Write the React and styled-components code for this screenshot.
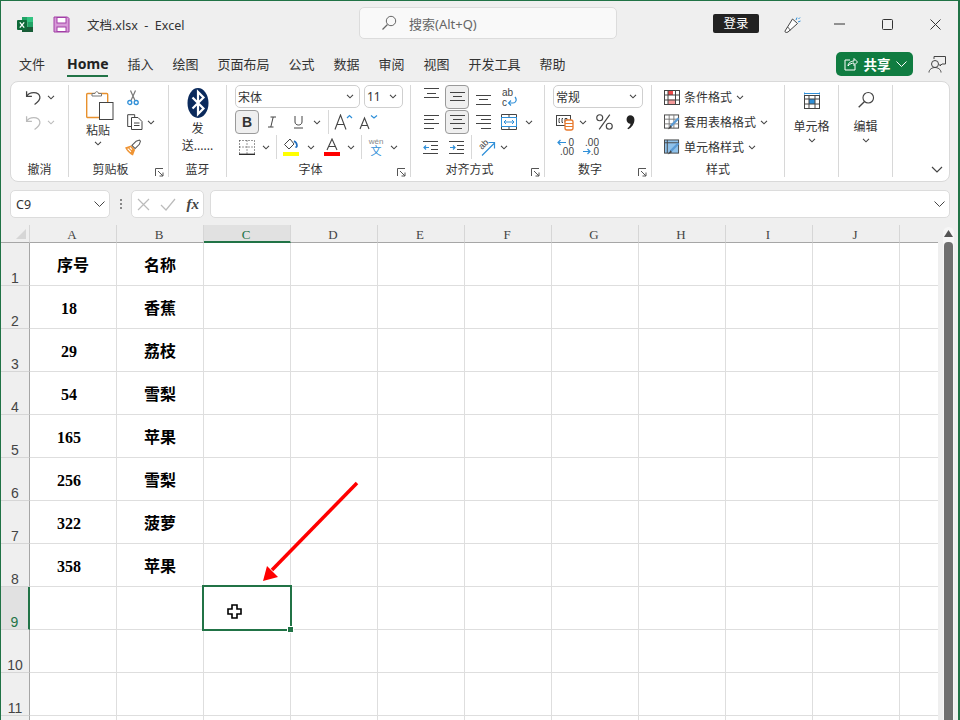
import React from 'react';
import styled, { createGlobalStyle } from 'styled-components';

const GREEN = '#217346';
const INK = '#444';
const BLUE = '#2f8fd8';

const GlobalStyle = createGlobalStyle`
  html, body { margin: 0; padding: 0; }
  body { font-family: "Noto Sans", "Noto Sans CJK SC", sans-serif; color: #333; }
  svg { display: block; flex: none; }
`;

const Win = styled.div`
  box-sizing: border-box;
  width: 960px;
  height: 720px;
  overflow: hidden;
  background: #efefef;
  border: 1px solid ${GREEN};
  border-right-width: 2px;
  border-bottom: 0;
  display: flex;
  flex-direction: column;
`;

const TitleBar = styled.div`
  box-sizing: border-box;
  height: 44px;
  padding-top: 2px;
  flex: none;
  display: flex;
  align-items: center;
  font-size: 12.5px;
`;

const TitleLeft = styled.div`
  width: 358px;
  display: flex;
  align-items: center;
  padding-left: 16px;
  box-sizing: border-box;
`;

const DocName = styled.span`
  white-space: pre;
  color: #333;
  margin-left: -1px;
`;

const SearchBox = styled.div`
  box-sizing: border-box;
  width: 258px;
  height: 32px;
  margin-top: -2px;
  background: #f9f9f9;
  border: 1px solid #dcdcdc;
  border-radius: 5px;
  display: flex;
  align-items: center;
  gap: 12px;
  padding-left: 21px;
  color: #666;
  font-size: 13px;
`;

const LoginBtn = styled.div`
  margin-left: 96px;
  margin-top: -1px;
  width: 46px;
  height: 19px;
  line-height: 19px;
  background: #222;
  color: #fff;
  border-radius: 2px;
  text-align: center;
  font-size: 12.5px;
`;

const WinBtn = styled.div`
  width: ${({ $w }) => $w}px;
  display: flex;
  justify-content: center;
`;

const TabBar = styled.div`
  height: 36px;
  flex: none;
  display: flex;
  align-items: flex-start;
  gap: 19px;
  padding-left: 18px;
  font-size: 13px;
  position: relative;
`;

const Tab = styled.div`
  height: 30px;
  line-height: 38px;
  box-sizing: content-box;
  white-space: nowrap;
  ${({ $active }) => $active && `
    font-weight: 700;
    font-size: 14px;
    color: #222;
    border-bottom: 2px solid ${GREEN};
    margin-left: 3px;
  `}
`;

const TabRight = styled.div`
  margin-left: auto;
  display: flex;
  align-items: center;
  gap: 15px;
  padding: 7px 12px 0 0;
`;

const ShareBtn = styled.div`
  width: 77px;
  height: 24px;
  box-sizing: border-box;
  background: #107c41;
  border-radius: 5px;
  color: #fff;
  display: flex;
  align-items: center;
  padding: 0 6px 0 8px;
  font-size: 13.5px;
  font-weight: 700;
  justify-content: space-between;
`;

const Ribbon = styled.div`
  flex: none;
  box-sizing: border-box;
  height: 101px;
  margin: 0 8px 0 9px;
  background: #fff;
  border: 1px solid #d9d9d9;
  border-radius: 8px;
  padding: 3px 0 4px;
  display: flex;
  position: relative;
`;

const Group = styled.div`
  box-sizing: border-box;
  width: ${({ $w }) => $w}px;
  border-right: 1px solid #d8d8d8;
  padding-left: ${({ $pad }) => $pad || 0}px;
  display: flex;
  flex-direction: column;
  position: relative;
`;

const GroupBody = styled.div`
  display: flex;
  flex-direction: ${({ $row }) => ($row ? 'row' : 'column')};
  gap: 1px;
  flex: 1;
`;

const GroupLabel = styled.div`
  font-size: 12px;
  line-height: 15px;
  height: 15px;
  text-align: center;
  color: #333;
  margin-left: ${({ $pad }) => ($pad ? -$pad : 0)}px;
  margin-right: ${({ $launcher }) => ($launcher ? 16 : 0)}px;
`;

const Launcher = styled.div`
  position: absolute;
  right: 4px;
  bottom: 0;
`;

const ToolRow = styled.div`
  height: 24px;
  display: flex;
  align-items: center;
  gap: ${({ $gap }) => $gap || 0}px;
  padding-left: ${({ $pad }) => $pad || 0}px;
  font-size: 12px;
`;

const Tool = styled.div`
  width: ${({ $w }) => $w}px;
  height: 24px;
  flex: none;
  display: flex;
  align-items: center;
  justify-content: center;
  box-sizing: border-box;
  ${({ $on }) => $on && `
    background: #efefef;
    border: 1px solid #9a9a9a;
    border-radius: 4px;
  `}
`;

const BoldMark = styled.span`
  font-family: "Liberation Sans", sans-serif;
  font-weight: 700;
  font-size: 14px;
  color: #333;
`;

const ToolSep = styled.div`
  width: 1px;
  height: 24px;
  flex: none;
  background: #d8d8d8;
  margin: 0 ${({ $r }) => $r || 0}px 0 ${({ $l }) => $l || 0}px;
`;

const Combo = styled.div`
  box-sizing: border-box;
  width: ${({ $w }) => $w}px;
  height: 23px;
  margin-bottom: 1px;
  border: 1px solid #cfcfcf;
  border-radius: 5px;
  display: flex;
  align-items: center;
  justify-content: space-between;
  padding: 0 5px 0 2px;
  font-size: 12px;
  color: #333;
`;

const BigTool = styled.div`
  display: flex;
  flex-direction: column;
  align-items: center;
  font-size: 12px;
  line-height: 17px;
  color: #333;
  gap: ${({ $gap }) => $gap || 0}px;
  padding-top: ${({ $top }) => $top || 0}px;
`;

const BigLabel = styled.span`
  margin-top: ${({ $mt }) => $mt || 0}px;
`;

const StyleText = styled.span`
  margin: 0 4px 0 4px;
  white-space: nowrap;
`;

const PasteCol = styled(BigTool)`
  width: 48px;
  margin-left: 5px;
`;

const SideCol = styled.div`
  display: flex;
  flex-direction: column;
  gap: 1px;
`;

const Collapse = styled.div`
  position: absolute;
  right: 6px;
  bottom: 8px;
`;

const FormulaBar = styled.div`
  flex: none;
  height: 28px;
  margin: 8px 8px 0 9px;
  display: flex;
  align-items: stretch;
`;

const BarBox = styled.div`
  box-sizing: border-box;
  background: #fff;
  border: 1px solid #dcdcdc;
  border-radius: 5px;
  display: flex;
  align-items: center;
  width: ${({ $w }) => ($w ? `${$w}px` : 'auto')};
  flex: ${({ $w }) => ($w ? 'none' : 1)};
  justify-content: ${({ $j }) => $j || 'space-between'};
  padding: 0 4px 0 5px;
  font-size: 12.5px;
`;

const Grip = styled.div`
  width: 21px;
  display: flex;
  justify-content: center;
  align-items: center;
`;

const BarGap = styled.div`
  width: 6px;
  flex: none;
`;

const FxText = styled.span`
  font-family: "Liberation Serif", serif;
  font-style: italic;
  font-weight: 700;
  font-size: 15px;
  color: #444;
`;

const Sheet = styled.div`
  flex: 1;
  margin-top: 7px;
  display: flex;
  position: relative;
  min-height: 0;
`;

const GridArea = styled.div`
  width: 937px;
  flex: none;
  background: #fff;
`;

const HeadRow = styled.div`
  display: flex;
  height: 18px;
  background: #efefef;
  font-family: "Liberation Serif", serif;
  font-size: 13px;
`;

const Corner = styled.div`
  box-sizing: border-box;
  width: 29px;
  flex: none;
  border-bottom: 1px solid #a6a6a6;
  border-right: 1px solid #d6d6d6;
  display: flex;
  justify-content: flex-end;
  align-items: flex-end;
  padding: 0 3px 3px 0;
`;

const ColHead = styled.div`
  box-sizing: border-box;
  width: ${({ $last }) => ($last ? 'auto' : '87px')};
  flex: ${({ $last }) => ($last ? 1 : 'none')};
  text-align: center;
  line-height: 20px;
  padding-right: 2px;
  color: ${({ $sel }) => ($sel ? GREEN : '#444')};
  background: ${({ $sel }) => ($sel ? '#e1e1e1' : 'transparent')};
  border-right: ${({ $last }) => ($last ? 0 : '1px solid #d6d6d6')};
  border-bottom: ${({ $sel }) => ($sel ? `2px solid ${GREEN}` : '1px solid #a6a6a6')};
`;

const Row = styled.div`
  display: flex;
  height: 43px;
`;

const RowHead = styled.div`
  box-sizing: border-box;
  width: 29px;
  flex: none;
  background: ${({ $sel }) => ($sel ? '#e1e1e1' : '#efefef')};
  color: ${({ $sel }) => ($sel ? GREEN : '#444')};
  border-right: ${({ $sel }) => ($sel ? `2px solid ${GREEN}` : '1px solid #a6a6a6')};
  border-bottom: 1px solid #d6d6d6;
  font-size: 14px;
  font-family: "Liberation Sans", sans-serif;
  display: flex;
  align-items: flex-end;
  justify-content: center;
  line-height: 14px;
`;

const Cell = styled.div`
  box-sizing: border-box;
  width: ${({ $last }) => ($last ? 'auto' : '87px')};
  flex: ${({ $last }) => ($last ? 1 : 'none')};
  border-right: ${({ $last }) => ($last ? 0 : '1px solid #dedede')};
  border-bottom: 1px solid #dedede;
  display: flex;
  align-items: center;
  justify-content: center;
  font-weight: 700;
  color: #000;
  font-size: 16px;
  position: relative;
  ${({ $num }) => $num && `
    font-family: "Liberation Serif", serif;
    padding: 3px 8px 0 0;
  `}
`;

const Selection = styled.div`
  position: absolute;
  left: -2px;
  top: -2px;
  right: -2px;
  bottom: -2px;
  border: 2px solid ${GREEN};
  z-index: 2;
`;

const FillHandle = styled.div`
  position: absolute;
  right: -3px;
  bottom: -3px;
  width: 5px;
  height: 5px;
  background: ${GREEN};
  border: 1px solid #fff;
  box-sizing: content-box;
  margin: -1px;
`;

const CursorMark = styled.svg`
  position: absolute;
  left: 23px;
  top: 17px;
`;

const ArrowMark = styled.svg`
  position: absolute;
  left: 259px;
  top: 255px;
  z-index: 3;
`;

const ScrollCol = styled.div`
  flex: 1;
  padding: 2px 4px 0 5px;
  overflow: hidden;
`;

const ScrollTrack = styled.div`
  background: #f6f6f6;
  border-radius: 6px 6px 0 0;
  height: 600px;
  display: flex;
  flex-direction: column;
  align-items: center;
  padding-top: 3px;
`;

const ScrollThumb = styled.div`
  width: 9px;
  flex: 1;
  margin-top: 5px;
  background: #6f6f6f;
  border-radius: 4px 4px 0 0;
`;

const Caret = ({ color = INK }) => (
  <svg width="8" height="5" viewBox="0 0 8 5"><path d="M1 .8l3 3 3-3" fill="none" stroke={color} strokeWidth="1.1" /></svg>
);

const BigCaret = ({ color = INK }) => (
  <svg width="11" height="6" viewBox="0 0 11 6"><path d="M.5 .5l5 5 5-5" fill="none" stroke={color} /></svg>
);

const LauncherIcon = () => (
  <svg width="9" height="9" viewBox="0 0 9 9"><path d="M.5 8V.5H8M3 3l5 5M8 4.5V8H4.500" fill="none" stroke="#555" /></svg>
);

const ExcelIcon = () => (
  <svg width="17" height="17" viewBox="0 0 17 17">
    <path d="M5 1h11v5H5z" fill="#21a366" />
    <path d="M10 1h6v5h-6z" fill="#33c481" />
    <path d="M5 6h5.500v5H5z" fill="#107c41" />
    <path d="M10.500 6H16v5h-5.500z" fill="#21a366" />
    <path d="M5 11h11v5H5z" fill="#185c37" />
    <rect x="0" y="4" width="10" height="10" rx="1" fill="#0e6a39" />
    <path d="M2.800 6.300l4.400 5.400M7.200 6.300l-4.400 5.400" stroke="#fff" strokeWidth="1.300" />
  </svg>
);

const SaveIcon = () => (
  <svg width="17" height="17" viewBox="0 0 17 17">
    <path d="M1 1h13.500L16 2.500V16H1z" fill="#d79ad8" stroke="#a23ea6" />
    <rect x="4" y="1.500" width="9" height="5.500" fill="#fff" stroke="#a23ea6" />
    <rect x="4" y="11" width="9" height="4.500" fill="#fff" stroke="#a23ea6" />
  </svg>
);

const SearchIcon = ({ size = 16, color = '#666' }) => (
  <svg width={size} height={size} viewBox="0 0 16 16">
    <circle cx="10" cy="6" r="4.700" fill="none" stroke={color} />
    <path d="M6.500 9.500L1.500 14.500" stroke={color} strokeWidth="1.200" />
  </svg>
);

const PartyIcon = () => (
  <svg width="17" height="17" viewBox="0 0 17 17">
    <path d="M1 15L8.500 3l5 4.500-9.500 8.500c-1.500 .8-3.500 .5-3-1z" fill="#fff" stroke="#444" />
    <path d="M3.500 11.500c1 0 2.500 1.500 2.500 3" fill="none" stroke="#444" />
    <path d="M12 4l1-2.500M14 6l2.500-1M14.500 3l1.500-1.500" stroke={BLUE} />
  </svg>
);

const UndoIcon = ({ color = INK }) => (
  <svg width="17" height="17" viewBox="0 0 16 16">
    <path d="M1.500 2v5h5" fill="none" stroke={color} strokeWidth="1.200" />
    <path d="M1.500 7C4 2.500 13 2 14 7.500c.5 3-2 5-5 7" fill="none" stroke={color} strokeWidth="1.200" />
  </svg>
);

const PasteIcon = () => (
  <svg width="32" height="30" viewBox="-4 0 32 30">
    <rect x=".7" y="3.500" width="21" height="24" rx="1" fill="#fff" stroke="#e8912d" strokeWidth="1.400" />
    <path d="M6 6V3.500h3C9.500 1 12 1 12.500 3.500h3V6z" fill="#fff" stroke="#777" />
    <rect x="13.500" y="12.500" width="13.500" height="17" fill="#fff" stroke="#444" />
  </svg>
);

const ScissorsIcon = () => (
  <svg width="12" height="17" viewBox="0 0 12 16">
    <path d="M3.500 1l4.500 10M8.500 1L4 11" stroke="#777" strokeWidth="1.200" />
    <circle cx="2.800" cy="13" r="2" fill="none" stroke={BLUE} strokeWidth="1.300" />
    <circle cx="9.200" cy="13" r="2" fill="none" stroke={BLUE} strokeWidth="1.300" />
  </svg>
);

const CopyIcon = () => (
  <svg width="16" height="16" viewBox="0 0 16 16">
    <path d="M4 12.500H.7V.7h7v3" fill="none" stroke={INK} />
    <path d="M4.500 3.500H11l4 4v8H4.500z" fill="#fff" stroke={INK} />
    <path d="M7 9h5.500M7 11.500h5.500" stroke={INK} />
  </svg>
);

const BrushIcon = () => (
  <svg width="18" height="17" viewBox="0 0 16 16">
    <path d="M.5 8l5.500-2 4 4-2 5.500C5 14.500 2 11 .5 8z" fill="#ef9434" />
    <path d="M7 6l4-4 3-1 1 1-1 3-4 4z" fill="#fff" stroke="#555" />
    <path d="M3 9l3 3M5 8l2 2" stroke="#fff" />
  </svg>
);

const BluetoothIcon = () => (
  <svg width="22" height="30" viewBox="0 0 22 30">
    <ellipse cx="11" cy="15" rx="10.500" ry="15" fill="#0b2a5c" />
    <path d="M5.500 9.500l11 11L11 26V4l5.500 5.500-11 11" fill="none" stroke="#fff" strokeWidth="2.200" />
  </svg>
);

const ItalicIcon = () => (
  <svg width="10" height="12" viewBox="0 0 10 12"><path d="M3.500 1H9M1 11h5.500M6.200 1L3.800 11" fill="none" stroke={INK} /></svg>
);

const UnderlineIcon = () => (
  <svg width="11" height="14" viewBox="0 0 11 14"><path d="M2 1v6c0 4 7 4 7 0V1M1 13h9" fill="none" stroke={INK} /></svg>
);

const GrowIcon = ({ down }) => (
  <svg width="20" height="16" viewBox="0 0 20 16">
    <path d={down ? 'M1 15L5.500 4 10 15M2.500 11.500h6' : 'M1 15.500L6.500 1 12 15.500M3 10.500h7'} fill="none" stroke={INK} strokeWidth="1.100" />
    <path d={down ? 'M12 1.500l3 2.500 3-2.500' : 'M13 4l2.500-2.500L18 4'} fill="none" stroke={BLUE} strokeWidth="1.200" />
  </svg>
);

const BordersIcon = () => (
  <svg width="16" height="15" viewBox="0 0 16 15">
    <path d="M.5 .5h15M.5 .5v13M15.500 .5v13M8 .5v13M.5 7h15" stroke="#333" strokeDasharray="1 2" fill="none" />
    <path d="M0 14.300h16" stroke="#222" strokeWidth="1.300" />
  </svg>
);

const FillIcon = () => (
  <svg width="16" height="18" viewBox="0 0 16 18">
    <path d="M7 1L1.500 6.500 6 11l5-5z" fill="#fff" stroke={INK} />
    <path d="M11 3c2 1 3 3 3 5 0 1-1 1.500-1.500 .5" fill="none" stroke="#1f6fc0" strokeWidth="1.600" />
    <rect x="0" y="14" width="16" height="4" fill="#ffff00" />
  </svg>
);

const FontColorIcon = () => (
  <svg width="16" height="18" viewBox="0 0 16 18">
    <path d="M3 12L8 1l5 11M4.500 8.500h7" fill="none" stroke={INK} strokeWidth="1.100" />
    <rect x="0" y="14" width="16" height="4" fill="#ff0000" />
  </svg>
);

const PhoneticIcon = () => (
  <svg width="20" height="23" viewBox="0 0 20 23">
    <text x="10" y="8" fontSize="8" textAnchor="middle" fill="#888" fontFamily="Liberation Sans">wén</text>
    <text x="10" y="19" fontSize="11" textAnchor="middle" fill={BLUE} fontFamily="Noto Sans CJK SC">文</text>
  </svg>
);

const LinesIcon = ({ rows }) => (
  <svg width="15" height="19" viewBox="0 0 15 19">
    {rows.map(([x1, x2, y]) => (
      <path key={`${x1}-${y}`} d={`M${x1} ${y}.5H${x2}`} stroke={INK} />
    ))}
  </svg>
);

const WrapIcon = () => (
  <svg width="17" height="19" viewBox="0 0 17 19">
    <text x="1" y="8" fontSize="10" fill={INK} fontFamily="Liberation Sans">ab</text>
    <text x="1" y="18" fontSize="10" fill={INK} fontFamily="Liberation Sans">c</text>
    <path d="M14 9c2.500 3 .5 6-2 6H8M10 12.500L7.500 15l2.500 2.500" fill="none" stroke={BLUE} strokeWidth="1.200" />
  </svg>
);

const MergeIcon = () => (
  <svg width="16" height="16" viewBox="0 0 16 16">
    <path d="M.5 .5h15v15H.5zM.5 3.500h15M.5 12.500h15M8 .5v3M8 12.500v3" fill="none" stroke={INK} />
    <rect x=".5" y="3.500" width="15" height="9" fill="#fff" stroke={BLUE} />
    <path d="M3 8h10M5 6l-2 2 2 2M11 6l2 2-2 2" fill="none" stroke={BLUE} />
  </svg>
);

const IndentIcon = ({ out }) => (
  <svg width="16" height="13" viewBox="0 0 16 13">
    <path d="M0 .5h15M8 4.500h7M8 8.500h7M0 12.500h15" stroke={INK} />
    <path d={out ? 'M6 6.500H1M3 4.500l-2 2 2 2' : 'M1 6.500h5M4 4.500l2 2-2 2'} fill="none" stroke={BLUE} strokeWidth="1.200" />
  </svg>
);

const OrientIcon = () => (
  <svg width="20" height="20" viewBox="0 0 20 20">
    <text x="6" y="13" fontSize="9" fill={INK} fontFamily="Liberation Sans" transform="rotate(-45 6 13)">ab</text>
    <path d="M6 18.500L18 6.500M12.500 5.500H18.500V11.500" fill="none" stroke={BLUE} strokeWidth="1.200" />
  </svg>
);

const CurrencyIcon = () => (
  <svg width="18" height="17" viewBox="0 0 18 17">
    <rect x=".5" y="1.500" width="14" height="10" fill="#fff" stroke={INK} />
    <path d="M4 4.500H3v4h1M7 4.500H6v4h1M9 8.500v-4h2v4" fill="none" stroke={INK} />
    <rect x="9" y="6" width="8" height="10" rx="2" fill="#fff" stroke="#e8792d" strokeWidth="1.300" />
    <path d="M9 9.500h8M9 12.500h8" stroke="#e8792d" />
  </svg>
);

const PercentIcon = () => (
  <svg width="17" height="16" viewBox="0 0 16 15">
    <circle cx="3.500" cy="3.500" r="2.800" fill="none" stroke={INK} strokeWidth="1.100" />
    <circle cx="12.500" cy="11.500" r="2.800" fill="none" stroke={INK} strokeWidth="1.100" />
    <path d="M13 .5L3 14.500" stroke={INK} strokeWidth="1.100" />
  </svg>
);

const CommaIcon = () => (
  <svg width="9" height="15" viewBox="0 0 8 13">
    <path d="M3.500 0c2.500 0 4 1.500 4 4 0 3.500-2.500 7-5.500 8.500l-.8-.8C3 10 4 9 4 7.500 2 7.500 .5 6 .5 4S1.500 0 3.500 0z" fill="#222" />
  </svg>
);

const DecimalIcon = ({ more }) => (
  <svg width="18" height="24" viewBox="0 0 18 24">
    <text x="17" y="11" fontSize="10" textAnchor="end" fill={INK} fontFamily="Liberation Sans">{more ? '.00' : '0'}</text>
    <text x="17" y="20" fontSize="10" textAnchor="end" fill={INK} fontFamily="Liberation Sans">{more ? '.0' : '.00'}</text>
    <path d={more ? 'M1 16.500h7M5.500 14L8 16.500 5.500 19' : 'M9 7.500H1M3.500 5L1 7.500 3.500 10'} fill="none" stroke={BLUE} strokeWidth="1.200" />
  </svg>
);

const CondFormatIcon = () => (
  <svg width="16" height="15" viewBox="0 0 16 15">
    <rect x=".5" y=".5" width="15" height="14" fill="#fff" stroke={INK} />
    <rect x="4" y="1" width="5" height="4" fill="#ef4a4a" />
    <rect x="4" y="9.500" width="8" height="4.500" fill="#f39a9a" />
    <path d="M.5 5h15M.5 10h15M4 .5v14M11.500 .5v14" stroke={INK} />
  </svg>
);

const TableFormatIcon = ({ filled }) => (
  <svg width="16" height="16" viewBox="0 0 17 16">
    <rect x=".5" y=".5" width="15" height="14" fill={filled ? '#8fc1ea' : '#fff'} stroke={INK} />
    {!filled && <path d="M.5 5h15M.5 10h15M5.500 .5v14M10.500 .5v14" stroke="#777" />}
    {filled && <path d="M.5 3.500h15M3.500 .5v14" stroke={INK} />}
    <path d="M15.500 4L7 12.500" stroke="#5b9bd5" strokeWidth="2.500" />
    <path d="M7 11.500l-3 4.500 4.500-2.500z" fill={INK} />
  </svg>
);

const CellsIcon = () => (
  <svg width="16" height="17" viewBox="0 0 16 17">
    <path d="M.5 2.500v-2M15.500 2.500v-2M.5 1.500h15" stroke={BLUE} />
    <rect x=".5" y="3.500" width="15" height="13" fill="#fff" stroke={INK} />
    <rect x="5" y="7" width="6" height="5" fill={BLUE} />
    <path d="M.5 7h15M.5 12h15M5 3.500v13M11 3.500v13" stroke={INK} />
  </svg>
);

const ShareIcon = () => (
  <svg width="14" height="14" viewBox="0 0 14 14">
    <path d="M6 3H1v10h10V8" fill="none" stroke="#fff" />
    <path d="M4 9c0-3 3-5 6-5V1.500L13.500 5 10 8.500V6C8 6 5.500 7 4 9z" fill="none" stroke="#fff" />
  </svg>
);

const CommentUserIcon = () => (
  <svg width="18" height="17" viewBox="0 0 18 17">
    <circle cx="7" cy="8" r="3.500" fill="none" stroke={INK} />
    <path d="M1 16.500c0-3 3-5 6-5s6 2 6 5" fill="none" stroke={INK} />
    <path d="M6 3V.5h11.500V8H14l-2 2V8" fill="none" stroke={INK} />
  </svg>
);

const COLS = ['A', 'B', 'C', 'D', 'E', 'F', 'G', 'H', 'I', 'J'];
const TABS = ['插入', '绘图', '页面布局', '公式', '数据', '审阅', '视图', '开发工具', '帮助'];
const DATA = [
  ['序号', '名称'],
  ['18', '香蕉'],
  ['29', '荔枝'],
  ['54', '雪梨'],
  ['165', '苹果'],
  ['256', '雪梨'],
  ['322', '菠萝'],
  ['358', '苹果'],
  ['', ''],
  ['', ''],
  ['', ''],
];

const TOP = [[0, 15, 0], [3, 12, 5], [0, 15, 9]];
const MID = [[0, 15, 4], [3, 12, 8], [0, 15, 12]];
const BOT = [[0, 15, 7], [3, 12, 11], [0, 15, 16]];
const LEFT = [[0, 15, 2], [0, 10, 6], [0, 15, 10], [0, 10, 15]];
const CENTER = [[0, 15, 2], [3, 12, 6], [0, 15, 10], [3, 12, 15]];
const RIGHT = [[0, 15, 2], [5, 15, 6], [0, 15, 10], [5, 15, 15]];

const SheetRow = ({ index, values }) => (
  <Row>
    <RowHead $sel={index === 9}>{index}</RowHead>
    {COLS.map((c, i) => (
      <Cell key={c} $num={i === 0 && index > 1}>
        {values[i]}
        {index === 9 && c === 'C' && (
          <Selection>
            <CursorMark width="15" height="15" viewBox="0 0 15 15">
              <path d="M5 1h5v4h4v5h-4v4H5v-4H1V5h4z" fill="#fff" stroke="#000" strokeWidth="1.600" />
            </CursorMark>
            <FillHandle />
          </Selection>
        )}
      </Cell>
    ))}
    <Cell $last />
  </Row>
);

export default function App() {
  return (
    <>
      <GlobalStyle />
      <Win>
        <TitleBar>
          <TitleLeft>
            <ExcelIcon />
            <WinBtn $w={54}><SaveIcon /></WinBtn>
            <DocName>{'文档.xlsx  -  Excel'}</DocName>
          </TitleLeft>
          <SearchBox>
            <SearchIcon />
            <span>搜索(Alt+Q)</span>
          </SearchBox>
          <LoginBtn>登录</LoginBtn>
          <WinBtn $w={66}><PartyIcon /></WinBtn>
          <WinBtn $w={28}>
            <svg width="11" height="2"><path d="M0 1h11" stroke="#333" /></svg>
          </WinBtn>
          <WinBtn $w={68}>
            <svg width="11" height="11"><rect x=".5" y=".5" width="10" height="10" rx="1" fill="none" stroke="#333" /></svg>
          </WinBtn>
          <WinBtn $w={28}>
            <svg width="11" height="11"><path d="M.5 .5l10 10M10.500 .5l-10 10" stroke="#333" /></svg>
          </WinBtn>
        </TitleBar>

        <TabBar>
          <Tab>文件</Tab>
          <Tab $active>Home</Tab>
          {TABS.map((t) => <Tab key={t}>{t}</Tab>)}
          <TabRight>
            <ShareBtn>
              <ShareIcon />
              <span>共享</span>
              <BigCaret color="#fff" />
            </ShareBtn>
            <CommentUserIcon />
          </TabRight>
        </TabBar>

        <Ribbon>
          <Group $w={58}>
            <GroupBody>
              <ToolRow $pad={9}>
                <Tool $w={26}><UndoIcon /></Tool>
                <Tool $w={10}><Caret /></Tool>
              </ToolRow>
              <ToolRow $pad={9}>
                <Tool $w={26}><UndoIcon color="#bbb" /></Tool>
                <Tool $w={10}><Caret color="#bbb" /></Tool>
              </ToolRow>
            </GroupBody>
            <GroupLabel>撤消</GroupLabel>
          </Group>

          <Group $w={100}>
            <GroupBody $row>
              <PasteCol $top={5} $gap={2}>
                <PasteIcon />
                <span>粘贴</span>
                <Caret />
              </PasteCol>
              <SideCol>
                <ToolRow><Tool $w={20}><ScissorsIcon /></Tool></ToolRow>
                <ToolRow>
                  <Tool $w={24}><CopyIcon /></Tool>
                  <Tool $w={8}><Caret /></Tool>
                </ToolRow>
                <ToolRow><Tool $w={20}><BrushIcon /></Tool></ToolRow>
              </SideCol>
            </GroupBody>
            <GroupLabel $launcher>剪贴板</GroupLabel>
            <Launcher><LauncherIcon /></Launcher>
          </Group>

          <Group $w={58}>
            <GroupBody>
              <BigTool $top={3}>
                <BluetoothIcon />
                <BigLabel $mt={2}>发</BigLabel>
                <span>送......</span>
              </BigTool>
            </GroupBody>
            <GroupLabel>蓝牙</GroupLabel>
          </Group>

          <Group $w={184} $pad={8}>
            <GroupBody>
              <ToolRow $gap={4}>
                <Combo $w={125}>宋体<Caret /></Combo>
                <Combo $w={39}>11<Caret /></Combo>
              </ToolRow>
              <ToolRow>
                <Tool $w={24} $on><BoldMark>B</BoldMark></Tool>
                <Tool $w={26}><ItalicIcon /></Tool>
                <Tool $w={26}><UnderlineIcon /></Tool>
                <Tool $w={12}><Caret /></Tool>
                <ToolSep $l={5} $r={5} />
                <Tool $w={20}><GrowIcon /></Tool>
                <Tool $w={30}><GrowIcon down /></Tool>
              </ToolRow>
              <ToolRow>
                <Tool $w={24}><BordersIcon /></Tool>
                <Tool $w={14}><Caret /></Tool>
                <ToolSep $l={3} />
                <Tool $w={28}><FillIcon /></Tool>
                <Tool $w={12}><Caret /></Tool>
                <Tool $w={30}><FontColorIcon /></Tool>
                <Tool $w={8}><Caret /></Tool>
                <ToolSep $l={6} />
                <Tool $w={28}><PhoneticIcon /></Tool>
                <Tool $w={8}><Caret /></Tool>
              </ToolRow>
            </GroupBody>
            <GroupLabel $pad={8} $launcher>字体</GroupLabel>
            <Launcher><LauncherIcon /></Launcher>
          </Group>

          <Group $w={134} $pad={8}>
            <GroupBody>
              <ToolRow $gap={2}>
                <Tool $w={24}><LinesIcon rows={TOP} /></Tool>
                <Tool $w={24} $on><LinesIcon rows={MID} /></Tool>
                <Tool $w={24}><LinesIcon rows={BOT} /></Tool>
                <Tool $w={24}><WrapIcon /></Tool>
              </ToolRow>
              <ToolRow $gap={2}>
                <Tool $w={24}><LinesIcon rows={LEFT} /></Tool>
                <Tool $w={24} $on><LinesIcon rows={CENTER} /></Tool>
                <Tool $w={24}><LinesIcon rows={RIGHT} /></Tool>
                <Tool $w={24}><MergeIcon /></Tool>
                <Tool $w={12}><Caret /></Tool>
              </ToolRow>
              <ToolRow $gap={2}>
                <Tool $w={24}><IndentIcon out /></Tool>
                <Tool $w={24}><IndentIcon /></Tool>
                <ToolSep />
                <Tool $w={24}><OrientIcon /></Tool>
                <Tool $w={8}><Caret /></Tool>
              </ToolRow>
            </GroupBody>
            <GroupLabel $pad={8} $launcher>对齐方式</GroupLabel>
            <Launcher><LauncherIcon /></Launcher>
          </Group>

          <Group $w={107} $pad={8}>
            <GroupBody>
              <ToolRow><Combo $w={90}>常规<Caret /></Combo></ToolRow>
              <ToolRow>
                <Tool $w={24}><CurrencyIcon /></Tool>
                <Tool $w={12}><Caret /></Tool>
                <Tool $w={30}><PercentIcon /></Tool>
                <Tool $w={22}><CommaIcon /></Tool>
              </ToolRow>
              <ToolRow>
                <Tool $w={26}><DecimalIcon /></Tool>
                <Tool $w={24}><DecimalIcon more /></Tool>
              </ToolRow>
            </GroupBody>
            <GroupLabel $pad={8} $launcher>数字</GroupLabel>
            <Launcher><LauncherIcon /></Launcher>
          </Group>

          <Group $w={133} $pad={12}>
            <GroupBody>
              <ToolRow><CondFormatIcon /><StyleText>条件格式</StyleText><Caret /></ToolRow>
              <ToolRow><TableFormatIcon /><StyleText>套用表格格式</StyleText><Caret /></ToolRow>
              <ToolRow><TableFormatIcon filled /><StyleText>单元格样式</StyleText><Caret /></ToolRow>
            </GroupBody>
            <GroupLabel $pad={12}>样式</GroupLabel>
          </Group>

          <Group $w={54}>
            <BigTool $top={7} $gap={3}>
              <CellsIcon />
              <BigLabel $mt={6}>单元格</BigLabel>
              <Caret />
            </BigTool>
          </Group>

          <Group $w={54}>
            <BigTool $top={6} $gap={3}>
              <SearchIcon size={18} color={INK} />
              <BigLabel $mt={6}>编辑</BigLabel>
              <Caret />
            </BigTool>
          </Group>

          <Collapse>
            <svg width="12" height="7" viewBox="0 0 12 7"><path d="M1 1l5 5 5-5" fill="none" stroke={INK} strokeWidth="1.200" /></svg>
          </Collapse>
        </Ribbon>

        <FormulaBar>
          <BarBox $w={100}>C9<BigCaret /></BarBox>
          <Grip>
            <svg width="2" height="10"><path d="M1 0v2M1 4v2M1 8v2" stroke="#888" strokeWidth="2" /></svg>
          </Grip>
          <BarBox $w={73}>
            <svg width="13" height="13"><path d="M1 1l11 11M12 1L1 12" stroke="#bbb" strokeWidth="1.200" /></svg>
            <svg width="16" height="13"><path d="M1 7l5 5L15 1" fill="none" stroke="#bbb" strokeWidth="1.200" /></svg>
            <FxText>fx</FxText>
          </BarBox>
          <BarGap />
          <BarBox $j="flex-end"><BigCaret /></BarBox>
        </FormulaBar>

        <Sheet>
          <GridArea>
            <HeadRow>
              <Corner>
                <svg width="10" height="10"><path d="M10 0v10H0z" fill="#d6d6d6" /></svg>
              </Corner>
              {COLS.map((c) => <ColHead key={c} $sel={c === 'C'}>{c}</ColHead>)}
              <ColHead $last />
            </HeadRow>
            {DATA.map((values, i) => <SheetRow key={i} index={i + 1} values={values} />)}
            <SheetRow values={[]} />
          </GridArea>
          <ScrollCol>
            <ScrollTrack>
              <svg width="9" height="7"><path d="M4.500 0L9 7H0z" fill="#555" /></svg>
              <ScrollThumb />
            </ScrollTrack>
          </ScrollCol>
          <ArrowMark width="100" height="105" viewBox="0 0 100 105">
            <path d="M97 3L12 90" stroke="#ff0000" strokeWidth="3.500" />
            <path d="M3 101L7 86 18 97z" fill="#ff0000" />
          </ArrowMark>
        </Sheet>
      </Win>
    </>
  );
}
